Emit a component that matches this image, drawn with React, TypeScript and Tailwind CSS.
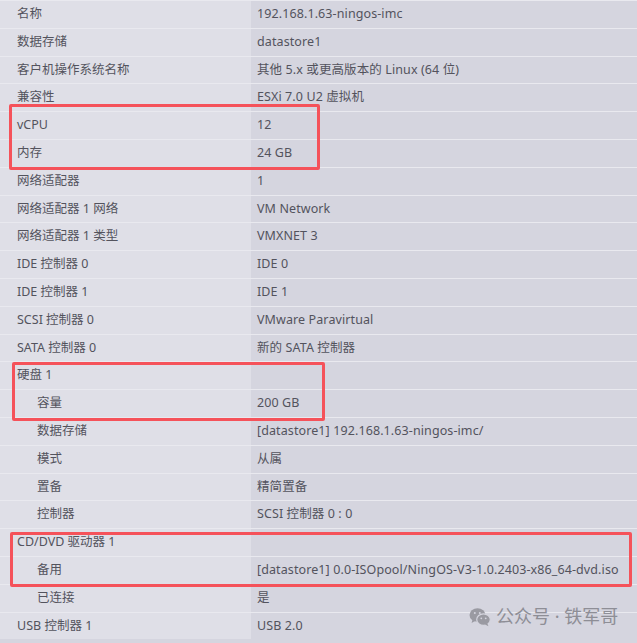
import React from "react";

type Row = { label: string; value: string; indent?: boolean };

const rows: Row[] = [
  { label: "名称", value: "192.168.1.63-ningos-imc" },
  { label: "数据存储", value: "datastore1" },
  { label: "客户机操作系统名称", value: "其他 5.x 或更高版本的 Linux (64 位)" },
  { label: "兼容性", value: "ESXi 7.0 U2 虚拟机" },
  { label: "vCPU", value: "12" },
  { label: "内存", value: "24 GB" },
  { label: "网络适配器", value: "1" },
  { label: "网络适配器 1 网络", value: "VM Network" },
  { label: "网络适配器 1 类型", value: "VMXNET 3" },
  { label: "IDE 控制器 0", value: "IDE 0" },
  { label: "IDE 控制器 1", value: "IDE 1" },
  { label: "SCSI 控制器 0", value: "VMware Paravirtual" },
  { label: "SATA 控制器 0", value: "新的 SATA 控制器" },
  { label: "硬盘 1", value: "" },
  { label: "容量", value: "200 GB", indent: true },
  { label: "数据存储", value: "[datastore1] 192.168.1.63-ningos-imc/", indent: true },
  { label: "模式", value: "从属", indent: true },
  { label: "置备", value: "精简置备", indent: true },
  { label: "控制器", value: "SCSI 控制器 0 : 0", indent: true },
  { label: "CD/DVD 驱动器 1", value: "" },
  { label: "备用", value: "[datastore1] 0.0-ISOpool/NingOS-V3-1.0.2403-x86_64-dvd.iso", indent: true },
  { label: "已连接", value: "是", indent: true },
  { label: "USB 控制器 1", value: "USB 2.0" },
];

function WeChatIcon() {
  return (
    <svg width="22" height="20" viewBox="0 0 22 20" fill="#9a9aa2">
      <ellipse cx="8.5" cy="8" rx="8" ry="6.8" />
      <path d="M3.5 12.5 L2.6 16 L6.5 13.8 Z" />
      <ellipse cx="14.5" cy="12.6" rx="6.8" ry="5.8" fill="#9a9aa2" stroke="#d5d5df" strokeWidth="1.2" />
      <path d="M18.3 16.5 L19.5 19.3 L16 17.6 Z" />
      <circle cx="5.8" cy="6" r="1" fill="#d5d5df" />
      <circle cx="10.8" cy="6" r="1" fill="#d5d5df" />
      <circle cx="12.3" cy="11.3" r="0.9" fill="#d5d5df" />
      <circle cx="16.7" cy="11.3" r="0.9" fill="#d5d5df" />
    </svg>
  );
}

export default function App() {
  return (
    <div
      className="relative h-[643px] w-[637px] overflow-hidden bg-[#d5d5df] text-[12.5px] text-[#53535d]"
      style={{ fontFamily: '"Noto Sans", "Noto Sans CJK SC", sans-serif' }}
    >
      <div className="flex flex-col">
        {rows.map((row, i) => (
          <div key={i} className="flex h-[27.8px] border-t border-[#e9e9ef]">
            <div className={`flex w-[251px] items-center bg-[#dfdfe7] ${row.indent ? "pl-[37px]" : "pl-[17px]"}`}>
              {row.label}
            </div>
            <div className="flex flex-1 items-center bg-[#d5d5df] pl-[6px] whitespace-nowrap tracking-[0.1px]">
              {row.value}
            </div>
          </div>
        ))}
      </div>

      {/* highlight boxes */}
      <div className="absolute left-[9px] top-[104px] h-[66px] w-[311px] rounded-[2px] border-[3px] border-[#f5525a]" />
      <div className="absolute left-[12px] top-[362px] h-[59px] w-[313px] rounded-[2px] border-[3px] border-[#f5525a]" />
      <div className="absolute left-[10px] top-[532px] h-[55px] w-[622px] rounded-[2px] border-[3px] border-[#f5525a]" />

      {/* watermark */}
      <div className="absolute left-[469px] top-[603px] flex items-center gap-[5px] text-[18px] text-[#8e8e96]">
        <WeChatIcon />
        <span>公众号 · 铁军哥</span>
      </div>
    </div>
  );
}
